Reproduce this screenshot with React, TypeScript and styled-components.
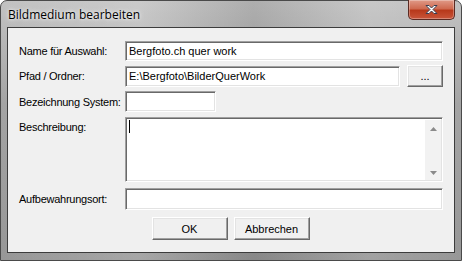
import styled, { createGlobalStyle } from "styled-components";

const Global = createGlobalStyle`
  html, body {
    margin: 0;
    padding: 0;
    background: #ffffff;
  }
`;

const Window = styled.div`
  width: 462px;
  height: 261px;
  box-sizing: border-box;
  display: flex;
  flex-direction: column;
  border-radius: 7px 7px 0 0;
  border: 1px solid #4a4a4a;
  background: linear-gradient(
      90deg,
      rgba(255, 255, 255, 0) 0%,
      rgba(255, 255, 255, 0.15) 30%,
      rgba(0, 0, 0, 0.1) 55%,
      rgba(255, 255, 255, 0.1) 80%,
      rgba(0, 0, 0, 0) 100%
    ),
    linear-gradient(180deg, #c2c2c2 0%, #a4a4a4 40%, #979797 100%);
  font-family: "Liberation Sans", Arial, sans-serif;
`;

const TitleBar = styled.div`
  height: 26px;
  display: flex;
  align-items: flex-start;
  padding-left: 7px;
`;

const Title = styled.div`
  font-family: "Open Sans", "Noto Sans", sans-serif;
  font-size: 12px;
  line-height: 16px;
  margin-top: 6px;
  color: #000;
  text-shadow: 0 0 6px rgba(255, 255, 255, 0.8), 0 0 3px rgba(255, 255, 255, 0.8);
`;

const CloseButton = styled.div`
  margin-left: auto;
  margin-right: 6px;
  margin-top: -1px;
  width: 47px;
  height: 20px;
  box-sizing: border-box;
  border: 1px solid #5b2a22;
  border-top: none;
  border-radius: 0 0 5px 5px;
  background: linear-gradient(180deg, #e09a88 0%, #cf6a50 45%, #b8391b 55%, #c9553a 100%);
  box-shadow: inset 0 0 0 1px rgba(255, 255, 255, 0.3);
  display: flex;
  align-items: center;
  justify-content: center;
`;

const Client = styled.div`
  flex: 1;
  margin: 0 6px 7px 6px;
  border: 1px solid #3c3c3c;
  background: #f0f0f0;
  padding: 13px 11px 0 11px;
  display: flex;
  flex-direction: column;
`;

const Row = styled.div<{ $gap: number; $top?: boolean }>`
  display: flex;
  align-items: ${(p) => (p.$top ? "flex-start" : "center")};
  margin-top: ${(p) => p.$gap}px;
`;

const Label = styled.div<{ $top?: boolean }>`
  width: 106px;
  flex: none;
  font-size: 11px;
  color: #000;
  white-space: nowrap;
  letter-spacing: -0.25px;
  padding-top: ${(p) => (p.$top ? "4px" : "0")};
`;

const Sunken = styled.div<{ $w?: number; $h: number }>`
  box-sizing: border-box;
  ${(p) => (p.$w ? `width: ${p.$w}px; flex: none;` : "flex: 1;")}
  height: ${(p) => p.$h}px;
  background: #fff;
  border: 1px solid;
  border-color: #a0a0a0 #ffffff #ffffff #a0a0a0;
  box-shadow: inset 1px 1px 0 #696969, inset -1px -1px 0 #e3e3e3;
  font-size: 11px;
  color: #000;
  padding: 3px 0 0 3px;
  white-space: nowrap;
  overflow: hidden;
  position: relative;
`;

const Raised = styled.div<{ $w: number; $h: number }>`
  box-sizing: border-box;
  width: ${(p) => p.$w}px;
  height: ${(p) => p.$h}px;
  flex: none;
  background: #f0f0f0;
  border: 1px solid;
  border-color: #ffffff #696969 #696969 #ffffff;
  box-shadow: inset -1px -1px 0 #a0a0a0, inset 1px 1px 0 #e3e3e3;
  font-size: 11px;
  color: #000;
  display: flex;
  align-items: center;
  justify-content: center;
`;

const Caret = styled.div`
  position: absolute;
  left: 3px;
  top: 2px;
  width: 1px;
  height: 13px;
  background: #000;
`;

const ScrollTrack = styled.div`
  position: absolute;
  right: 1px;
  top: 2px;
  bottom: 1px;
  width: 16px;
  background: #f2f2f2;
  display: flex;
  flex-direction: column;
  justify-content: space-between;
  align-items: center;
  padding: 7px 0 5px;
  box-sizing: border-box;
`;

const Buttons = styled.div`
  display: flex;
  justify-content: center;
  gap: 6px;
  margin-top: 7px;
  padding-right: 1px;
`;

export default function App() {
  return (
    <>
      <Global />
      <Window>
        <TitleBar>
          <Title>Bildmedium bearbeiten</Title>
          <CloseButton>
            <svg width="15" height="11" viewBox="0 0 15 11">
              <path
                d="M2 1.5 L5 1.5 L7.5 4 L10 1.5 L13 1.5 L9 5.5 L13 9.5 L10 9.5 L7.5 7 L5 9.5 L2 9.5 L6 5.5 Z"
                fill="#ffffff"
                stroke="#3a3f52"
                strokeWidth="1"
                strokeLinejoin="round"
              />
            </svg>
          </CloseButton>
        </TitleBar>
        <Client>
          <Row $gap={0}>
            <Label>Name für Auswahl:</Label>
            <Sunken $h={20}>Bergfoto.ch quer work</Sunken>
          </Row>
          <Row $gap={4}>
            <Label>Pfad / Ordner:</Label>
            <Sunken $h={21}>E:\Bergfoto\BilderQuerWork</Sunken>
            <Raised $w={36} $h={22} style={{ marginLeft: 7 }}>
              ...
            </Raised>
          </Row>
          <Row $gap={4}>
            <Label>Bezeichnung System:</Label>
            <Sunken $w={91} $h={21} />
          </Row>
          <Row $gap={5} $top>
            <Label $top>Beschreibung:</Label>
            <Sunken $h={65}>
              <Caret />
              <ScrollTrack>
                <svg width="7" height="4" viewBox="0 0 7 4">
                  <path d="M3.5 0 L7 4 L0 4 Z" fill="#8a8a8a" />
                </svg>
                <svg width="7" height="4" viewBox="0 0 7 4">
                  <path d="M0 0 L7 0 L3.5 4 Z" fill="#8a8a8a" />
                </svg>
              </ScrollTrack>
            </Sunken>
          </Row>
          <Row $gap={6}>
            <Label>Aufbewahrungsort:</Label>
            <Sunken $h={22} />
          </Row>
          <Buttons>
            <Raised $w={76} $h={23}>OK</Raised>
            <Raised $w={76} $h={23}>Abbrechen</Raised>
          </Buttons>
        </Client>
      </Window>
    </>
  );
}
